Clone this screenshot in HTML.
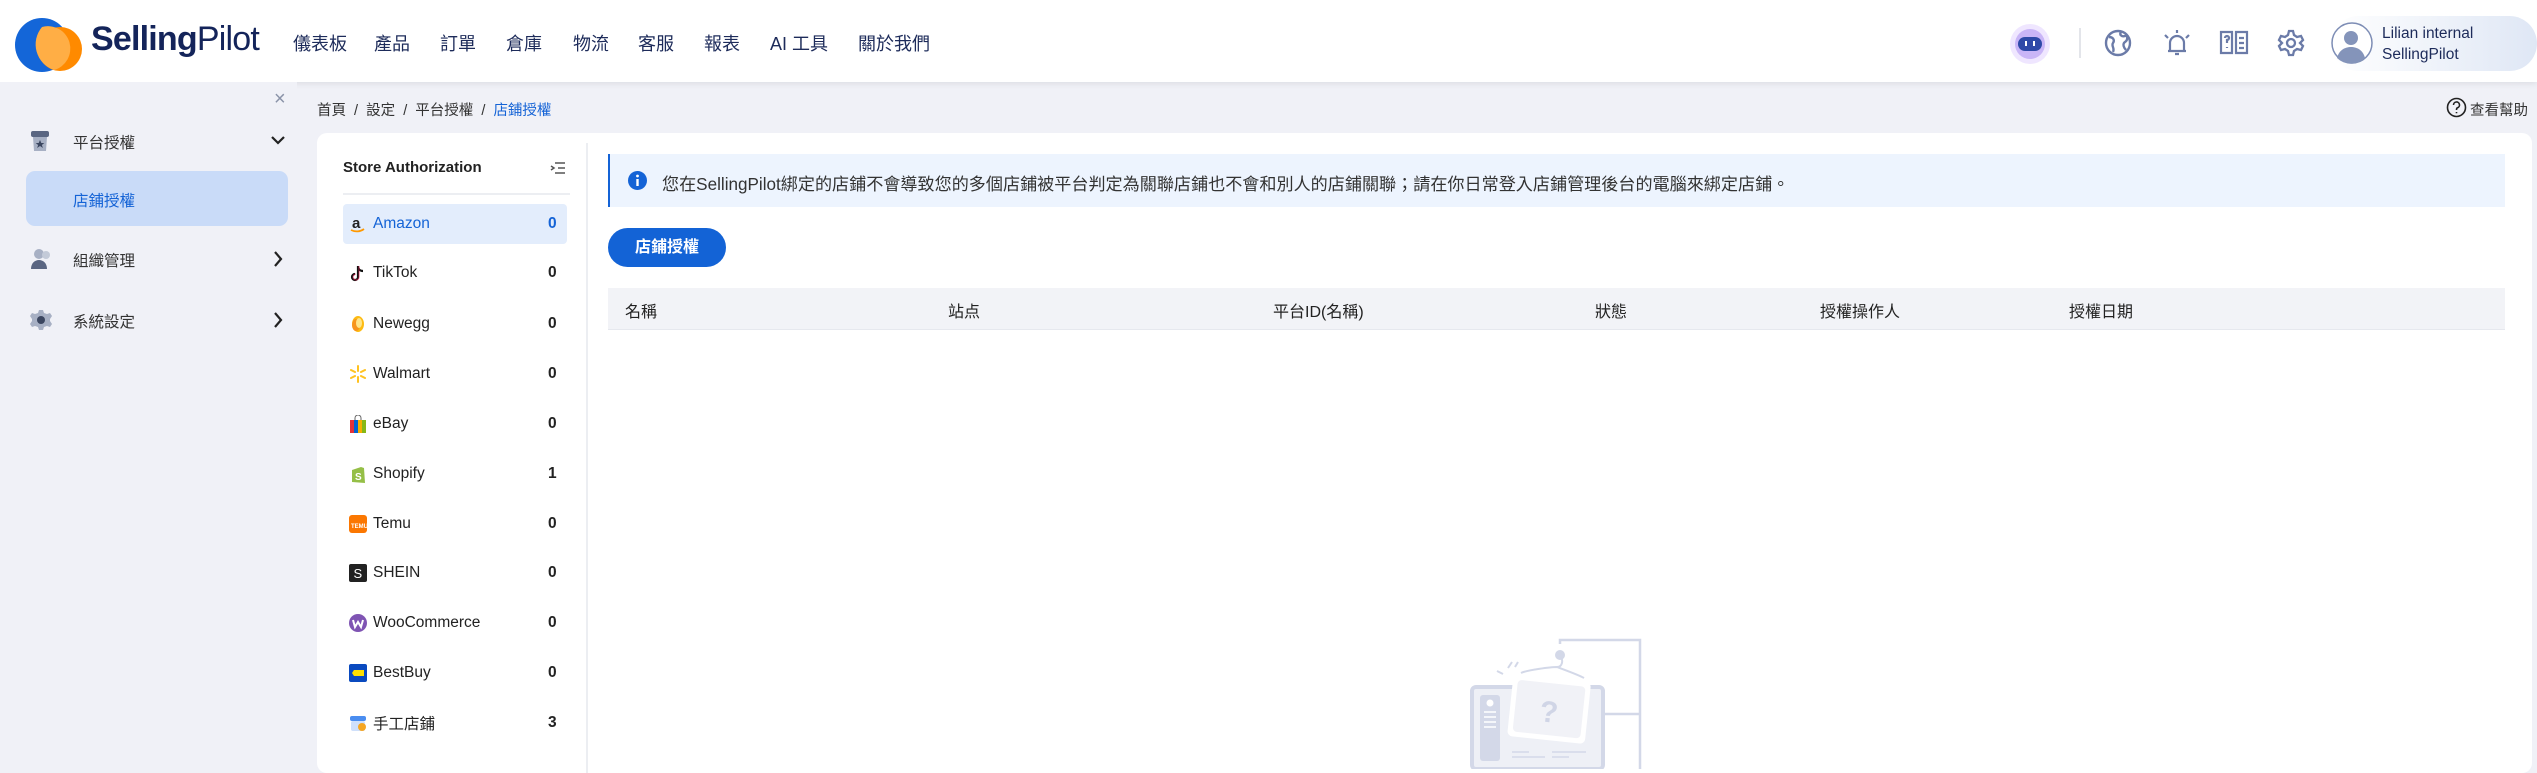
<!DOCTYPE html>
<html><head><meta charset="utf-8"><style>
*{margin:0;padding:0;box-sizing:border-box}
body{width:2537px;height:769px;overflow:hidden;background:#f0f1f7;font-family:"Liberation Sans","Noto Sans CJK TC",sans-serif;color:#222;position:relative}
.abs{position:absolute}
.hdr{left:0;top:0;width:2537px;height:82px;background:#fff;box-shadow:0 2px 6px rgba(0,0,0,.08)}
.nav{top:30px;font-size:18px;color:#1d2b5a}
.side{left:0;top:82px;width:297px;height:687px;background:#f0f1f7}
.si{font-size:15.5px;color:#333}
.card{left:317px;top:133px;width:2215px;height:640px;background:#fff;border-radius:10px}
.row{left:343px;width:224px;height:40px;font-size:15.5px;color:#222}
.row .ic{position:absolute;left:6px;top:11px;width:18px;height:18px}
.row .t{position:absolute;left:30px;top:11px}
.row .c{position:absolute;left:205px;top:11px;font-weight:bold}
.th{top:298px;font-size:16px;color:#222}
</style></head><body>
<div class="abs hdr"></div>
<svg class="abs" style="left:14px;top:15px" width="72" height="60"><circle cx="28" cy="30" r="27" fill="#1466d8"/><circle cx="46" cy="34" r="22" fill="#ff8a00"/><path d="M28 12 A22 22 0 0 1 40 55 A27 27 0 0 1 28 12" fill="#ffae45"/></svg>
<div class="abs" style="left:91px;top:20px;font-size:34px;font-weight:bold;color:#14245a;letter-spacing:-0.8px">Selling<span style="font-weight:normal">Pilot</span></div>
<div class="abs nav" style="left:293px">儀表板</div>
<div class="abs nav" style="left:374px">產品</div>
<div class="abs nav" style="left:440px">訂單</div>
<div class="abs nav" style="left:506px">倉庫</div>
<div class="abs nav" style="left:573px">物流</div>
<div class="abs nav" style="left:638px">客服</div>
<div class="abs nav" style="left:704px">報表</div>
<div class="abs nav" style="left:770px">AI 工具</div>
<div class="abs nav" style="left:858px">關於我們</div>
<svg class="abs" style="left:2008px;top:22px" width="44" height="44"><circle cx="22" cy="22" r="20" fill="#efe6ff"/><circle cx="22" cy="22" r="15" fill="#c9b5f7"/><rect x="10" y="15" width="24" height="14" rx="7" fill="#2e49a8"/><rect x="17" y="19" width="2" height="5" fill="#fff"/><rect x="25" y="19" width="2" height="5" fill="#fff"/></svg>
<div class="abs" style="left:2079px;top:28px;width:2px;height:30px;background:#e3e5ea"></div>
<svg class="abs" style="left:2104px;top:29px" width="28" height="28" fill="none" stroke="#6b7ba8" stroke-width="2.4"><circle cx="14" cy="14" r="12"/><path d="M5 8c4 0 6 3 4 6s2 5 0 9M17 3c-2 3 1 5 4 4s3 4 0 6-1 6 1 8" /></svg>
<svg class="abs" style="left:2162px;top:28px" width="30" height="30" fill="none" stroke="#6b7ba8" stroke-width="2.2"><path d="M8 23V15a7 7 0 0 1 14 0v8H6h18M13 26h4M3 7l3 3M27 7l-3 3M15 2v3"/></svg>
<svg class="abs" style="left:2219px;top:30px" width="30" height="26" fill="none" stroke="#6b7ba8" stroke-width="2.2"><path d="M2 2h11v21H2zM17 2h11v21H17zM20 8h5M20 13h5M20 18h5M6 8a2 2 0 1 1 2 2v3M8 17v1"/></svg>
<svg class="abs" style="left:2277px;top:29px" width="28" height="28" fill="none" stroke="#6b7ba8" stroke-width="2.3"><circle cx="14" cy="14" r="4"/><path d="M12 2h4l1 4 3 2 4-1 2 4-3 3v0l3 3-2 4-4-1-3 2-1 4h-4l-1-4-3-2-4 1-2-4 3-3-3-3 2-4 4 1 3-2z"/></svg>
<div class="abs" style="left:2331px;top:16px;width:206px;height:55px;border-radius:28px;background:linear-gradient(90deg,#fff,#dfe7f5)"></div>
<svg class="abs" style="left:2331px;top:22px" width="44" height="44"><circle cx="21" cy="21" r="20" fill="#fff" stroke="#7d8db5" stroke-width="1.5"/><circle cx="20" cy="16" r="7" fill="#8494ba"/><path d="M6 36c2-8 8-11 14-11s12 3 14 11a20 20 0 0 1-28 0z" fill="#8494ba"/></svg>
<div class="abs" style="left:2382px;top:23px;font-size:15.5px;color:#1d2b5a;line-height:21px">Lilian internal<br>SellingPilot</div>

<div class="abs side"></div>
<div class="abs" style="left:274px;top:88px;font-size:20px;color:#8a93a8">×</div>
<svg class="abs" style="left:30px;top:130px" width="20" height="22"><rect x="1" y="1" width="18" height="6" rx="2" fill="#5a6682"/><path d="M3 7h14l-1 14H4z" fill="#a7b0c4"/><path d="M10 10l1.3 3h3l-2.4 2 1 3-2.9-2-2.9 2 1-3-2.4-2h3z" fill="#3b4660"/></svg>
<div class="abs si" style="left:73px;top:131px">平台授權</div>
<svg class="abs" style="left:270px;top:134px" width="16" height="12" fill="none" stroke="#222" stroke-width="2.2"><path d="M2 3l6 6 6-6"/></svg>
<div class="abs" style="left:26px;top:171px;width:262px;height:55px;background:#c9dbf8;border-radius:9px"></div>
<div class="abs si" style="left:73px;top:189px;color:#1463d6">店鋪授權</div>
<svg class="abs" style="left:30px;top:248px" width="22" height="22"><circle cx="9" cy="6" r="5" fill="#a7b0c4"/><path d="M1 21c0-6 4-9 8-9s8 3 8 9z" fill="#5a6682"/><circle cx="16" cy="7" r="4" fill="#c3cad8"/></svg>
<div class="abs si" style="left:73px;top:249px">組織管理</div>
<svg class="abs" style="left:272px;top:250px" width="12" height="18" fill="none" stroke="#222" stroke-width="2.2"><path d="M3 2l6 7-6 7"/></svg>
<svg class="abs" style="left:30px;top:309px" width="22" height="22"><path d="M9 1h4l1 3 3 1 3-1 2 3-2 3v2l2 3-2 3-3-1-3 1-1 3H9l-1-3-3-1-3 1-2-3 2-3v-2L0 7l2-3 3 1 3-1z" fill="#a7b0c4"/><circle cx="11" cy="11" r="4" fill="#3b4660"/></svg>
<div class="abs si" style="left:73px;top:310px">系統設定</div>
<svg class="abs" style="left:272px;top:311px" width="12" height="18" fill="none" stroke="#222" stroke-width="2.2"><path d="M3 2l6 7-6 7"/></svg>

<div class="abs" style="left:317px;top:99px;font-size:14.5px;color:#333">首頁&nbsp;&nbsp;/&nbsp;&nbsp;設定&nbsp;&nbsp;/&nbsp;&nbsp;平台授權&nbsp;&nbsp;/&nbsp;&nbsp;<span style="color:#1463d6">店鋪授權</span></div>
<svg class="abs" style="left:2446px;top:97px" width="21" height="21" fill="none" stroke="#222" stroke-width="1.6"><circle cx="10.5" cy="10.5" r="9"/><path d="M7.5 8a3 3 0 1 1 4 2.8c-1 .4-1 1-1 2.2M10.5 15v1.2"/></svg>
<div class="abs" style="left:2470px;top:99px;font-size:14.5px;color:#333">查看幫助</div>

<div class="abs card"></div>
<div class="abs" style="left:343px;top:159px;font-size:15px;font-weight:bold;color:#222">Store Authorization</div>
<svg class="abs" style="left:550px;top:161px" width="16" height="14" fill="none" stroke="#555" stroke-width="1.5"><path d="M5 2h10M8 7h7M5 12h10M1 5l3 2-3 2"/></svg>
<div class="abs" style="left:343px;top:193px;width:227px;height:2px;background:#eceef2"></div>
<div class="abs" style="left:586px;top:143px;width:2px;height:630px;background:#eceef2"></div>

<div class="abs row" style="top:204px;background:#e3edfc;border-radius:4px;color:#1463d6"><svg class="ic" viewBox="0 0 18 18"><text x="3" y="13" font-size="15" font-weight="bold" fill="#222" font-family="Liberation Sans">a</text><path d="M2 15c4 2 9 2 13-1" stroke="#f90" stroke-width="1.8" fill="none"/></svg><span class="t">Amazon</span><span class="c" style="color:#1463d6">0</span></div>
<div class="abs row" style="top:253px"><svg class="ic" viewBox="0 0 18 18"><path d="M9 2v11a3 3 0 1 1-3-3M9 2c0 3 2 5 5 5" stroke="#111" stroke-width="2.2" fill="none"/><path d="M10 2v11a3 3 0 1 1-3-3" stroke="#ee1d52" stroke-width="1" fill="none" opacity=".6"/></svg><span class="t">TikTok</span><span class="c">0</span></div>
<div class="abs row" style="top:304px"><svg class="ic" viewBox="0 0 18 18"><ellipse cx="9" cy="9" rx="6" ry="8" fill="#fdbb12"/><ellipse cx="7" cy="10" rx="4" ry="6" fill="#f7941d"/><ellipse cx="10" cy="8" rx="3" ry="5" fill="#ffe58a"/></svg><span class="t">Newegg</span><span class="c">0</span></div>
<div class="abs row" style="top:354px"><svg class="ic" viewBox="0 0 18 18" stroke="#ffc220" stroke-width="2" stroke-linecap="round"><path d="M9 1v5M9 12v5M2 5l4 2M16 5l-4 2M2 13l4-2M16 13l-4-2"/></svg><span class="t">Walmart</span><span class="c">0</span></div>
<div class="abs row" style="top:404px"><svg class="ic" viewBox="0 0 18 18"><path d="M6 5V3a3 3 0 0 1 6 0v2" stroke="#666" fill="none"/><rect x="1" y="5" width="4" height="13" fill="#e53238"/><rect x="5" y="5" width="4" height="13" fill="#0064d2"/><rect x="9" y="5" width="4" height="13" fill="#f5af02"/><rect x="13" y="5" width="4" height="13" fill="#86b817"/></svg><span class="t">eBay</span><span class="c">0</span></div>
<div class="abs row" style="top:454px"><svg class="ic" viewBox="0 0 18 18"><path d="M3 5l9-3 3 1 1 15-13-1z" fill="#95bf47"/><text x="6" y="15" font-size="10" font-weight="bold" fill="#fff" font-family="Liberation Sans">S</text></svg><span class="t">Shopify</span><span class="c">1</span></div>
<div class="abs row" style="top:504px"><svg class="ic" viewBox="0 0 18 18"><rect width="18" height="18" rx="3" fill="#fb7701"/><text x="2" y="13" font-size="6" font-weight="bold" fill="#fff" font-family="Liberation Sans">TEMU</text></svg><span class="t">Temu</span><span class="c">0</span></div>
<div class="abs row" style="top:553px"><svg class="ic" viewBox="0 0 18 18"><rect width="18" height="18" rx="2" fill="#222"/><text x="4.5" y="14" font-size="13" fill="#fff" font-family="Liberation Sans">S</text></svg><span class="t">SHEIN</span><span class="c">0</span></div>
<div class="abs row" style="top:603px"><svg class="ic" viewBox="0 0 18 18"><circle cx="9" cy="9" r="9" fill="#7f54b3"/><path d="M4 6l2 7 3-5 3 5 2-7" stroke="#fff" stroke-width="2" fill="none"/></svg><span class="t">WooCommerce</span><span class="c">0</span></div>
<div class="abs row" style="top:653px"><svg class="ic" viewBox="0 0 18 18"><rect width="18" height="18" rx="2" fill="#0a4abf"/><path d="M5 6h10v6H5l-2-3z" fill="#ffe000"/></svg><span class="t">BestBuy</span><span class="c">0</span></div>
<div class="abs row" style="top:703px"><svg class="ic" viewBox="0 0 18 18"><rect x="1" y="2" width="16" height="5" rx="2" fill="#4a8df0"/><rect x="2" y="7" width="14" height="10" rx="2" fill="#cfe0fb"/><circle cx="13" cy="13" r="4" fill="#f5a623"/></svg><span class="t" style="top:9px">手工店鋪</span><span class="c">3</span></div>

<div class="abs" style="left:608px;top:154px;width:1897px;height:53px;background:#edf4fe;border-left:2px solid #1463d6"></div>
<svg class="abs" style="left:628px;top:171px" width="19" height="19"><circle cx="9.5" cy="9.5" r="9.5" fill="#1463d6"/><rect x="8.3" y="8" width="2.4" height="7" fill="#fff"/><circle cx="9.5" cy="5" r="1.4" fill="#fff"/></svg>
<div class="abs" style="left:662px;top:170px;font-size:17.1px;color:#333;white-space:nowrap">您在SellingPilot綁定的店鋪不會導致您的多個店鋪被平台判定為關聯店鋪也不會和別人的店鋪關聯；請在你日常登入店鋪管理後台的電腦來綁定店鋪。</div>
<div class="abs" style="left:608px;top:228px;width:118px;height:39px;background:#1363d6;border-radius:20px;color:#fff;font-weight:bold;font-size:16px;text-align:center;line-height:39px">店鋪授權</div>
<div class="abs" style="left:608px;top:288px;width:1897px;height:42px;background:#f2f3f7;border-bottom:1px solid #e6e8ee"></div>
<div class="abs th" style="left:625px">名稱</div>
<div class="abs th" style="left:948px">站点</div>
<div class="abs th" style="left:1273px">平台ID(名稱)</div>
<div class="abs th" style="left:1595px">狀態</div>
<div class="abs th" style="left:1820px">授權操作人</div>
<div class="abs th" style="left:2069px">授權日期</div>

<svg class="abs" style="left:1460px;top:630px" width="200" height="139" fill="none">
<path d="M100 84h40M100 14V10h80v129M180 84h-40" stroke="#d3d8e8" stroke-width="2.5"/>
<circle cx="100" cy="25" r="5" fill="#d3d8e8"/>
<path d="M100 25c4 6 2 12-3 12-6 0-30 3-36 6M97 37c8 3 22 8 27 11" stroke="#d3d8e8" stroke-width="2"/>
<path d="M48 38l4-6M43 44l-6-3M55 37l3-5" stroke="#d3d8e8" stroke-width="2"/>
<rect x="12" y="57" width="131" height="82" rx="4" fill="#eef0f6" stroke="#d3d8e8" stroke-width="4"/>
<rect x="20" y="65" width="20" height="66" rx="3" fill="#d3d8e8"/>
<circle cx="30" cy="73" r="3.5" fill="#fff"/>
<path d="M24 82h12M24 87h12M24 92h12M24 97h12" stroke="#fff" stroke-width="1.5"/>
<path d="M52 122h17M52 127h33M92 122h34M92 127h17" stroke="#d3d8e8" stroke-width="1.5"/>
<g transform="rotate(6 88 80)"><rect x="50" y="48" width="78" height="62" rx="5" fill="#fff"/><rect x="55" y="53" width="68" height="52" rx="4" fill="#f1f2f7"/><text x="80" y="92" font-size="30" font-weight="bold" fill="#d0d5e6" font-family="Liberation Sans">?</text></g>
</svg>
</body></html>
